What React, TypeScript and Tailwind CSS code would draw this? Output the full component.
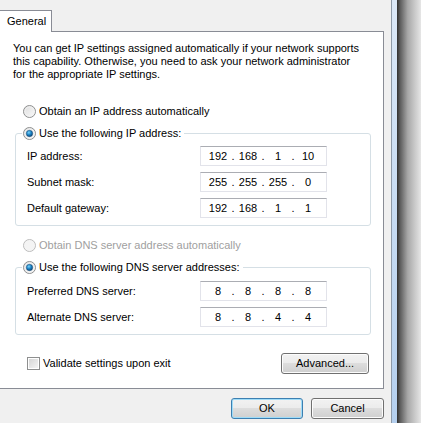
import React from 'react';

const FONT = "font-['Liberation_Sans',Arial,sans-serif]";

const Radio: React.FC<{ checked?: boolean; disabled?: boolean }> = ({ checked, disabled }) => (
  <svg width="13" height="13" viewBox="0 0 13 13" className="shrink-0">
    <defs>
      <linearGradient id="rfill" x1="0" y1="0" x2="1" y2="1">
        <stop offset="0" stopColor="#dcdcdc" />
        <stop offset="1" stopColor="#fbfbfb" />
      </linearGradient>
      <radialGradient id="rdot" cx="0.4" cy="0.35" r="0.7">
        <stop offset="0" stopColor="#7ad4fb" />
        <stop offset="0.5" stopColor="#1b83c5" />
        <stop offset="1" stopColor="#0b3f6e" />
      </radialGradient>
    </defs>
    <circle cx="6.5" cy="6.5" r="6" fill={disabled ? '#f4f4f4' : 'url(#rfill)'} stroke={disabled ? '#bcbcbc' : '#8e8f8f'} />
    <circle cx="6.5" cy="6.5" r="4.6" fill="none" stroke={disabled ? '#f4f4f4' : '#f2f2f2'} strokeWidth="0.8" />
    {checked && <circle cx="6.5" cy="6.5" r="3.2" fill="url(#rdot)" stroke="#1d4f7a" strokeWidth="0.5" />}
  </svg>
);

const IpField: React.FC<{ parts: string[] }> = ({ parts }) => (
  <div className="w-[127px] h-[20px] bg-white border border-[#e2e3ea] border-t-[#abadb3] flex items-center pl-[4px] text-[11px] text-[#000]">
    {parts.map((p, i) => (
      <React.Fragment key={i}>
        <span className="w-[26px] text-center">{p}</span>
        {i < 3 && <span className="w-[4px] text-center">.</span>}
      </React.Fragment>
    ))}
  </div>
);

const Row: React.FC<{ label: string; parts: string[] }> = ({ label, parts }) => (
  <div className="flex items-center h-[20px]">
    <span className="w-[184px] pl-[11px]">{label}</span>
    <IpField parts={parts} />
  </div>
);

const btn =
  'h-[21px] rounded-[3px] border text-[11px] text-black flex items-center justify-center bg-[linear-gradient(#f2f2f2_0%,#ebebeb_50%,#dddddd_50%,#cfcfcf_100%)]';

export default function App() {
  return (
    <div className={`w-[421px] h-[423px] flex overflow-hidden bg-[#f0f0f0] text-[11px] text-black ${FONT}`}>
      {/* dialog body */}
      <div className="w-[391px] flex flex-col">
        {/* tab strip */}
        <div className="h-[10px]" />
        <div className="relative z-10 -mb-px w-[52px] h-[22px] bg-white border-t border-r border-[#898c95] flex items-center pl-[7px] pb-px">
          General
        </div>

        {/* page */}
        <div className="w-[384px] h-[358px] bg-white border-t border-r border-b border-[#898c95] flex flex-col">
          <p className="mt-[10px] px-[13px] leading-[13px]">
            You can get IP settings assigned automatically if your network supports
            <br />
            this capability. Otherwise, you need to ask your network administrator
            <br />
            for the appropriate IP settings.
          </p>

          <div className="mt-[22px] ml-[23px] h-[16px] flex items-center gap-[3px]">
            <Radio />
            <span>Obtain an IP address automatically</span>
          </div>

          <fieldset className="mt-[6px] ml-[15px] w-[356px] border border-[#d5dfe5] rounded-[3px] pb-[7px]">
            <legend className="ml-[6px] pl-px pr-[3px] h-[16px] flex items-center gap-[3px]">
              <Radio checked />
              <span>Use the following IP address:</span>
            </legend>
            <div className="pt-[5px] flex flex-col gap-[6px]">
              <Row label="IP address:" parts={['192', '168', '1', '10']} />
              <Row label="Subnet mask:" parts={['255', '255', '255', '0']} />
              <Row label="Default gateway:" parts={['192', '168', '1', '1']} />
            </div>
          </fieldset>

          <div className="mt-[11px] ml-[23px] h-[16px] flex items-center gap-[3px] text-[#a0a0a0]">
            <Radio disabled />
            <span>Obtain DNS server address automatically</span>
          </div>

          <fieldset className="mt-[6px] ml-[15px] w-[356px] border border-[#d5dfe5] rounded-[3px] pb-[7px]">
            <legend className="ml-[6px] pl-px pr-[3px] h-[16px] flex items-center gap-[3px]">
              <Radio checked />
              <span>Use the following DNS server addresses:</span>
            </legend>
            <div className="pt-[6px] flex flex-col gap-[6px]">
              <Row label="Preferred DNS server:" parts={['8', '8', '8', '8']} />
              <Row label="Alternate DNS server:" parts={['8', '8', '4', '4']} />
            </div>
          </fieldset>

          <div className="mt-[18px] pl-[27px] pr-[14px] flex items-center justify-between">
            <label className="flex items-center gap-[3px]">
              <span className="w-[13px] h-[13px] border border-[#8e8f8f] bg-white p-px">
                <span className="block w-full h-full bg-[linear-gradient(135deg,#d6d6d6,#f4f4f4)]" />
              </span>
              <span>Validate settings upon exit</span>
            </label>
            <button className={`${btn} w-[88px] border-[#707070] shadow-[inset_0_0_0_1px_#fcfcfc]`}>
              Advanced...
            </button>
          </div>
        </div>

        {/* dialog buttons */}
        <div className="w-[384px] mt-[9px] flex justify-end gap-[8px]">
          <button className={`${btn} w-[72px] border-[#3c7fb1] shadow-[inset_0_0_0_1px_#9fdcf8]`}>OK</button>
          <button className={`${btn} w-[73px] border-[#707070] shadow-[inset_0_0_0_1px_#fcfcfc]`}>Cancel</button>
        </div>
      </div>

      {/* window frame at right edge */}
      <div className="w-px bg-[#8e9aa8]" />
      <div className="w-[5px] bg-[linear-gradient(#dbe8f7,#b4cfee)]" />
      <div className="w-[24px] bg-[linear-gradient(to_right,#303030,#5a5a5a_12%,#a8a8a8_45%,#e6e6e6)]" />
    </div>
  );
}
